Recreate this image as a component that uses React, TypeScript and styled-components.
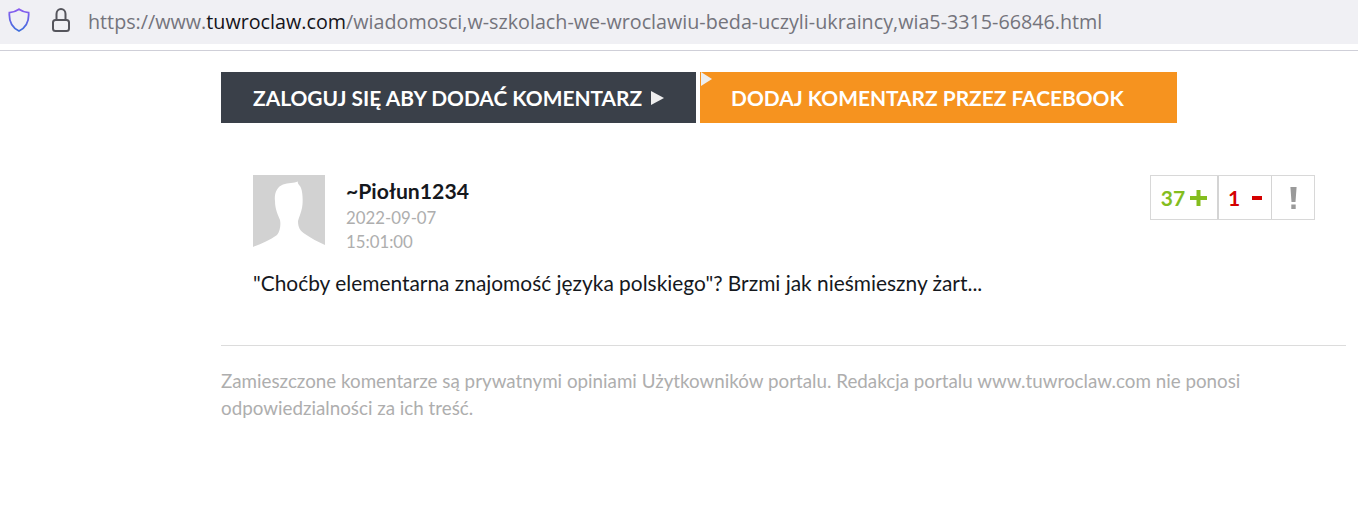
import React from 'react'
import styled, { createGlobalStyle } from 'styled-components'

const GlobalStyle = createGlobalStyle`
  html, body {
    margin: 0;
    padding: 0;
    background: #fff;
    overflow: hidden;
  }
`

const Page = styled.div`
  width: 1358px;
  height: 520px;
  font-family: Lato, "Liberation Sans", sans-serif;
`

const Toolbar = styled.div`
  box-sizing: border-box;
  height: 44px;
  background: #f0f0f4;
  display: flex;
  align-items: center;
  padding: 0 0 4px 8px;
  margin-bottom: 6px;
`

const ShieldIcon = styled.svg`
  display: block;
  flex: none;
`

const LockIcon = styled.svg`
  display: block;
  flex: none;
  margin-left: 20px;
`

const Url = styled.div`
  margin: 3px 0 0 16px;
  font-family: "Open Sans", "Noto Sans", sans-serif;
  font-size: 19.73px;
  color: #74747c;
  white-space: nowrap;
`

const Host = styled.span`
  color: #15141a;
`

const Content = styled.main`
  border-top: 1px solid #cfcfd8;
  padding: 21px 12px 0 221px;
`

const ButtonRow = styled.div`
  display: flex;
  gap: 4px;
`

const ActionButton = styled.div<{ $bg: string; $width: number; $pad: number }>`
  position: relative;
  display: flex;
  align-items: center;
  gap: 9px;
  box-sizing: border-box;
  width: ${({ $width }) => $width}px;
  height: 51px;
  padding-left: ${({ $pad }) => $pad}px;
  background: ${({ $bg }) => $bg};
  color: #fff;
  font-size: 20.9px;
  font-weight: 700;
  white-space: nowrap;
`

const Arrow = styled.span`
  width: 0;
  height: 0;
  border-left: 13px solid #eeeeee;
  border-top: 7px solid transparent;
  border-bottom: 7px solid transparent;
`

const CornerArrow = styled(Arrow)`
  position: absolute;
  top: 0;
  left: 1px;
  border-left-width: 11px;
`

const Comment = styled.article`
  padding: 52px 31px 0 32px;
`

const CommentHead = styled.header`
  display: flex;
  align-items: flex-start;
`

const Avatar = styled.div`
  flex: none;
  width: 72px;
  height: 73px;
  background: #d2d2d2;
  margin-right: 21px;
`

const AvatarShape = styled.svg`
  display: block;
`

const Meta = styled.div`
  flex: 1;
  padding-top: 3px;
`

const Author = styled.div`
  color: #15181d;
  font-size: 21.2px;
  font-weight: 700;
  line-height: 26px;
  margin-bottom: 2px;
`

const Stamp = styled.div`
  color: #aeaeae;
  font-size: 16.8px;
  line-height: 24px;
`

const Votes = styled.div`
  display: flex;
  height: 45px;
  border: 1px solid #d8d8d8;
  box-sizing: border-box;
`

const Vote = styled.div<{ $color: string; $width: number; $rule?: number }>`
  display: flex;
  align-items: center;
  justify-content: center;
  gap: 5px;
  box-sizing: border-box;
  width: ${({ $width }) => $width}px;
  border-left: ${({ $rule }) => $rule ?? 0}px solid #d4d4d4;
  color: ${({ $color }) => $color};
  font-size: 21px;
  font-weight: 700;
`

const MinusIcon = styled.svg`
  margin-left: 7px;
`

const CommentText = styled.p`
  margin: 16px 0 0;
  color: #15181d;
  font-size: 20.9px;
  line-height: 26px;
`

const Divider = styled.hr`
  border: 0;
  border-top: 1px solid #dcdcdc;
  margin: 49px 0 0;
`

const Disclaimer = styled.p`
  margin: 21px 0 0;
  color: #aeaeae;
  font-size: 18.8px;
  line-height: 27px;
`

const App: React.FC = () => {
  return (
    <Page>
      <GlobalStyle />
      <Toolbar>
        <ShieldIcon width="22" height="24" viewBox="0 0 22 24" fill="none">
          <defs>
            <linearGradient id="shield" x1="0" y1="0" x2="0" y2="1">
              <stop offset="0" stopColor="#8a5cf0" />
              <stop offset="1" stopColor="#3f6fdc" />
            </linearGradient>
          </defs>
          <path
            d="M11 1.2 C13.8 3.2 17 4.2 20.6 4.6 C21.2 13 18 19.6 11 23 C4 19.6 .8 13 1.4 4.6 C5 4.2 8.2 3.2 11 1.2 Z"
            stroke="url(#shield)"
            strokeWidth="1.8"
          />
        </ShieldIcon>
        <LockIcon width="22" height="24" viewBox="0 0 22 24" fill="none">
          <path d="M6.5 12 V6 a4.5 5 0 0 1 9 0 V12" stroke="#55555c" strokeWidth="2" />
          <rect x="3" y="12" width="16" height="11" rx="2.5" stroke="#55555c" strokeWidth="2" />
        </LockIcon>
        <Url>
          https://www.<Host>tuwroclaw.com</Host>/wiadomosci,w-szkolach-we-wroclawiu-beda-uczyli-ukraincy,wia5-3315-66846.html
        </Url>
      </Toolbar>
      <Content>
        <ButtonRow>
          <ActionButton $bg="#3a4049" $width={475} $pad={32}>
            ZALOGUJ SIĘ ABY DODAĆ KOMENTARZ
            <Arrow />
          </ActionButton>
          <ActionButton $bg="#f6931f" $width={477} $pad={31}>
            <CornerArrow />
            DODAJ KOMENTARZ PRZEZ FACEBOOK
          </ActionButton>
        </ButtonRow>
        <Comment>
          <CommentHead>
            <Avatar>
              <AvatarShape width="72" height="73" viewBox="0 0 72 73">
                <path
                  d="M22 26 C21 18 24 12 30 9.5 C35 8 41 8 45 6.5 C44 9 47 10 48 13 C50 18 50 28 49 33 C48 38 46 42 45 46 C45 52 47 56 52 59 C58 63 65 67 72 70 V73 H0 V72 C8 69 17 65 24 60 C27 56 28 50 27 45 C25 40 22 34 22 26 Z"
                  fill="#fff"
                />
              </AvatarShape>
            </Avatar>
            <Meta>
              <Author>~Piołun1234</Author>
              <Stamp>2022-09-07</Stamp>
              <Stamp>15:01:00</Stamp>
            </Meta>
            <Votes>
              <Vote $color="#84bd1e" $width={66}>
                37
                <svg width="17" height="16" viewBox="0 0 17 16">
                  <path d="M6.5 0h4v6h6.5v4h-6.5v6h-4v-6H0V6h6.5z" fill="#84bd1e" />
                </svg>
              </Vote>
              <Vote $color="#d40000" $width={54} $rule={2}>
                1
                <MinusIcon width="10" height="4" viewBox="0 0 10 4">
                  <rect width="10" height="4" fill="#d40000" />
                </MinusIcon>
              </Vote>
              <Vote $color="#9a9a9a" $width={43} $rule={1}>
                <svg width="7" height="22" viewBox="0 0 7 22">
                  <path d="M0.4 0h6.2l-1.1 15H1.5z M1.3 17.5h4.4V22H1.3z" fill="#9a9a9a" />
                </svg>
              </Vote>
            </Votes>
          </CommentHead>
          <CommentText>"Choćby elementarna znajomość języka polskiego"? Brzmi jak nieśmieszny żart...</CommentText>
        </Comment>
        <Divider />
        <Disclaimer>
          Zamieszczone komentarze są prywatnymi opiniami Użytkowników portalu. Redakcja portalu www.tuwroclaw.com nie ponosi
          <br />
          odpowiedzialności za ich treść.
        </Disclaimer>
      </Content>
    </Page>
  )
}

export default App
